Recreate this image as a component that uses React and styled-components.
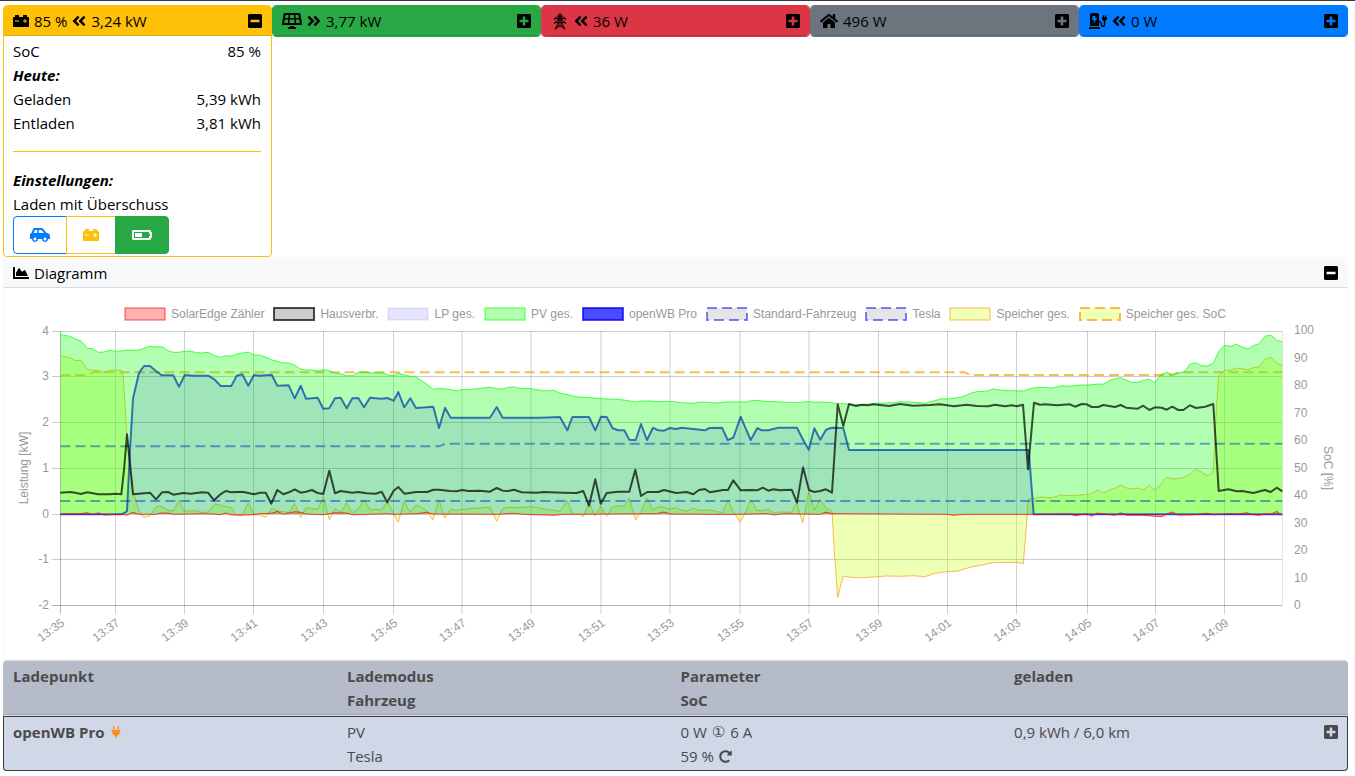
import React from "react";
import styled, { createGlobalStyle } from "styled-components";
import {
  FaAngleDoubleLeft,
  FaAngleDoubleRight,
  FaBatteryHalf,
  FaCarBattery,
  FaCarSide,
  FaChargingStation,
  FaChartArea,
  FaHome,
  FaMinusSquare,
  FaPlug,
  FaPlusSquare,
  FaRedoAlt,
  FaSolarPanel,
} from "react-icons/fa";

const GlobalStyle = createGlobalStyle`
  * { box-sizing: border-box; }
  body {
    margin: 0;
    background: #fff;
    color: #000;
    font: 15px/24px "Open Sans", "Noto Sans", sans-serif;
  }
  button { font: inherit; cursor: pointer; }
`;

const Page = styled.main`
  border-top: 1px solid #343a40;
  padding: 4px 7px 4px 3px;
`;

const CardDeck = styled.div`
  display: grid;
  grid-template-columns: repeat(5, 1fr);
  align-items: start;
`;

const Card = styled.section`
  border: 1px solid ${(p) => p.$color};
  border-radius: 4px;
  overflow: hidden;
`;

const CardHeader = styled.header`
  display: flex;
  align-items: center;
  justify-content: space-between;
  height: 30px;
  padding: 1px 9px 0;
  background: ${(p) => p.$color};
  border-bottom: 1px solid rgba(0, 0, 0, 0.125);
`;

const HeaderLabel = styled.span`
  display: flex;
  align-items: center;
  gap: 5px;
  white-space: nowrap;

  svg {
    flex: none;
  }
`;

const ToggleButton = styled.button`
  display: flex;
  padding: 0;
  border: 0;
  background: none;
  color: inherit;

  svg {
    width: 14px;
    height: 16px;
  }
`;

const Discharging = styled(FaAngleDoubleLeft)`
  width: 14px;
  height: 16px;
`;

const Producing = styled(FaAngleDoubleRight)`
  width: 14px;
  height: 16px;
`;

const CardBody = styled.div`
  padding: 3px 10px 2px 9px;
`;

const ValueRow = styled.div`
  display: flex;
  justify-content: space-between;
`;

const Subtitle = styled.div`
  font-weight: 700;
  font-style: italic;
`;

const Divider = styled.hr`
  margin: 16px 0;
  border: 0;
  border-top: 1px solid ${(p) => p.$color};
`;

const ButtonGroup = styled.div`
  display: flex;
`;

const GroupButton = styled.button`
  display: flex;
  align-items: center;
  justify-content: center;
  height: 38px;
  padding: 0 16px;
  border: 1px solid ${(p) => p.$color};
  background: ${(p) => (p.$active ? p.$color : "#fff")};
  color: ${(p) => (p.$active ? "#fff" : p.$color)};

  & + & {
    margin-left: -1px;
  }
  &:first-child {
    border-radius: 4px 0 0 4px;
  }
  &:last-child {
    border-radius: 0 4px 4px 0;
  }
`;

const ChartCard = styled.section`
  border: 1px solid #f8f9fa;
  border-top: 0;
  border-radius: 4px;
`;

const ChartHeader = styled.header`
  display: flex;
  align-items: center;
  justify-content: space-between;
  height: 31px;
  padding: 1px 9px 0;
  background: #f8f9fa;
  border-bottom: 1px solid #d9dadb;
`;

const Legend = styled.ul`
  display: flex;
  flex-wrap: wrap;
  justify-content: center;
  gap: 10px;
  margin: 0;
  padding: 19px 0 1px;
  list-style: none;
  color: #999;
  font: 12px/14px "Liberation Sans", Arial, sans-serif;
`;

const LegendItem = styled.li`
  display: flex;
  align-items: center;
  gap: 6px;
`;

const Swatch = styled.svg`
  width: 40px;
  height: 12px;
  overflow: visible;
`;

const Plot = styled.svg`
  display: block;
  width: 100%;
  height: auto;

  text {
    fill: #999;
    font: 12px "Liberation Sans", Arial, sans-serif;
  }
`;

const PointTable = styled.table`
  width: 100%;
  table-layout: fixed;
  border-collapse: separate;
  border-spacing: 0;
  color: #4b4b4b;

  th:first-child,
  td:first-child {
    width: 25.2%;
  }
  th:last-child,
  td:last-child {
    width: 25.2%;
  }
`;

const HeadCell = styled.th`
  padding: 3px 5px;
  background: #b5bbc9;
  border-top: 1px solid #d8dbe0;
  border-bottom: 1px solid #dfe2e8;
  box-shadow: inset 0 -1px #9ea4b0;
  text-align: left;
  vertical-align: top;
  font-weight: 700;

  &:first-child {
    border-top-left-radius: 4px;
    padding-left: 10px;
  }
  &:last-child {
    border-top-right-radius: 4px;
  }
`;

const BodyCell = styled.td`
  padding: 3px 5px 2px;
  background: #d0d7e7;
  border: solid #343a40;
  border-width: 1px 0;
  vertical-align: top;

  &:first-child {
    border-left-width: 1px;
    border-bottom-left-radius: 4px;
    padding-left: 9px;
    font-weight: 700;
  }
  &:last-child {
    border-right-width: 1px;
    border-bottom-right-radius: 4px;
    padding-right: 9px;
  }
`;

const CellLine = styled.div`
  display: flex;
  align-items: center;
  gap: 5px;
`;

const SplitLine = styled(CellLine)`
  justify-content: space-between;
`;

const PhaseCount = styled.span`
  font-family: "DejaVu Sans", sans-serif;
`;

const Pylon = () => (
  <svg width="18" height="18" viewBox="1 0 18 18" fill="none" stroke="currentColor" strokeWidth=".9">
    <path d="M8.5 5V2.5L10 1l1.500 1.500V5M4.500 6.500 8.500 3.500h3l4 3M4.500 6.500h11M4.500 10.500 8.500 7.500h3l4 3M4.500 10.500h11M8.500 5 8 11 5 17.500M11.500 5 12 11l3 6.500M8.500 3.500l3 3M11.500 3.500l-3 3M8.500 7l3.300 3.500M11.500 7l-3.300 3.500M8 11l5.500 4M12 11l-5.500 4M5.500 17l4.500-3 4.500 3M4.500 6.500v1.500M15.500 6.500v1.500M4.500 10.500V12M15.500 10.500V12" />
  </svg>
);

/* Each series is a list of stretches: a start offset, then x, y pairs, all in thirds of a plot unit. */
const trace = (...stretches) =>
  stretches.flatMap(([offset, ...v]) => {
    const points = [];
    for (let i = 0; i < v.length; i += 2) {
      points.push([(offset + v[i]) / 3, 290 + v[i + 1] / 3]);
    }
    return points;
  });

const line = (points) =>
  "M" + points.map(([x, y]) => `${x.toFixed(1)} ${y.toFixed(1)}`).join("L");

const ZERO = 514;
const area = (points) =>
  `${line(points)}L${points[points.length - 1][0].toFixed(1)} ${ZERO}L${points[0][0].toFixed(1)} ${ZERO}Z`;

const pv = trace(
  [0, 181,131,190,136,208,138,226,147,243,153,262,175,279,176,295,187,312,186,330,181,347,184,364,183,381,180,399,181,416,180,432,175,450,169,468,171,486,170,504,182,520,187,537,187,553,184,572,184,590,188,606,189,624,187,644,197,662,202,678,197,694,199,712,191,730,189,745,186,762,195,782,196,798,202,816,210,832,214,848,219,866,219,884,226,902,237,920,240,936,240,953,243,970,239,988,242,1005,249,1023,252,1040,257,1058,257,1075,247,1092,245,1110,249,1127,248,1145,248,1162,254,1181,257],
  [1140, 55,250,72,254,90,259,108,261,125,272,142,284,160,298,178,295,196,297,212,299,230,303,247,298,265,299,282,297,300,295,318,293,332,292,350,296,368,297,385,292,402,291,420,295,437,295,453,296,470,299,488,302,505,302,523,301,540,310,560,313,578,318,596,321,614,322,632,323,650,325,680,327,715,328,745,332,765,336,785,333,815,333,835,335,870,334,905,338,940,340,960,336,985,337,1005,339,1030,337],
  [2100, 75,336,105,336,120,335,135,337,150,333,175,331,190,334,225,335,260,337,290,338,327,335,343,337,360,336,395,338,412,341,430,341,465,344,500,343,535,339,552,340,570,338,580,339,600,335,640,337,675,340,690,336,708,331,725,326,742,327,765,324,785,321,815,309,830,305,850,304,865,302,880,297,905,301,930,302,970,303,985,298,1000,294,1020,292],
  [3060, 65,292,95,294,125,287,150,289,180,285,205,285,235,282,250,283,270,271,300,263,320,271,335,277,355,277,370,271,388,268,405,278,422,254,440,247,458,254,475,249,493,245,510,223,528,218,545,227,562,228,580,220,596,185,613,166,632,169,649,163,666,171,684,177,700,167,718,161,735,139,752,135,770,151,787,155]
);

const storage = trace(
  [0, 181,196,190,200,208,202,226,212,243,211,262,238,279,241,295,242,312,247,330,241,364,241,370,260,381,450,399,600,416,660,424,675,432,682,450,678,468,650,486,649,504,661,520,663,537,632,553,664,572,662,590,663,606,668,624,666,644,642,662,646,694,653,708,675,726,677,745,639,762,675,780,675,797,682,815,655,832,662,866,668,884,640,902,682,918,653,953,658,970,621,988,689,1005,656,1022,667,1040,638,1057,668,1074,658,1092,629,1110,660,1127,658,1145,661,1162,633,1181,672],
  [1140, 55,697,72,634,90,667,108,645,125,652,142,664,158,690,177,629,194,684,212,658,230,661,265,656,300,654,330,651,350,694,368,656,385,652,420,653,453,650,488,656,540,664,562,632,578,673,595,672,610,679,627,638,645,678,662,649,680,679,697,651,715,647,732,649,748,625,767,690,783,665,800,623,818,658,835,651,852,652,870,657,888,653,905,661,922,663,940,655,957,661,990,660,1027,668,1044,630],
  [2100, 100,665,121,697,137,665,153,629,170,661,190,662,205,657,220,669,240,666,274,667,290,640,308,699,327,603,343,661,361,628,378,655,396,664,404,800,413,922,422,885,430,858,450,862,485,863,520,861,560,858,600,859,640,857,675,860,700,851,740,845,770,844,810,832,850,824,880,818,950,817,970,821,978,720,985,628,1000,626,1020,621],
  [3060, 60,621,95,623,125,615,155,617,210,613,233,600,250,609,270,599,285,595,302,585,320,594,335,597,355,594,370,599,388,586,406,602,440,562,458,567,490,563,510,553,528,537,545,547,562,557,575,551,580,540,590,340,596,258,613,241,630,241,650,234,684,239,700,233,718,231,735,208,752,202,770,219,787,227]
);

const charge = trace(
  [0, 181,673,364,673,375,668,381,663,390,480,399,325,405,300,416,252,424,238,433,228,450,228,468,243,485,256,520,256,537,290,554,255,580,257,625,257,643,268,662,288,694,288,710,257,727,253,745,287,762,255,780,257,815,254,832,287,866,286,884,325,902,287,918,326,953,323,970,356,988,355,1005,325,1022,323,1040,355,1057,325,1075,324,1092,352,1110,323,1145,326,1162,324,1181,332],
  [1140, 55,306,73,352,91,325,108,354,160,350,177,414,195,353,212,383,330,383,350,351,368,383,480,383,540,381,562,421,577,381,627,381,646,421,663,380,680,381,698,415,715,421,733,421,748,449,767,450,783,402,801,450,819,413,835,421,852,422,870,414,888,417,905,413,975,421,988,414,1026,413,1043,450],
  [2100, 84,450,100,443,122,380,137,415,152,450,172,414,185,421,205,421,235,413,291,413,308,447,326,479,343,415,361,449,378,419,395,413,430,414,447,480,986,480,1001,673,1020,673],
  [3060, 787,673]
);

const house = trace(
  [0, 181,608,210,606,226,608,243,612,262,607,295,613,330,613,347,611,364,613,372,540,381,433,390,520,399,613,416,611,450,608,468,628,486,607,504,606,520,614,550,609,572,611,606,607,624,608,642,631,660,614,677,603,694,607,712,606,730,606,762,613,780,608,797,608,814,641,832,600,850,613,867,607,884,598,902,608,918,605,936,600,953,609,970,612,988,542,1005,610,1022,603,1057,608,1075,606,1100,610,1127,611,1145,605,1162,637,1181,602],
  [1140, 55,591,73,611,108,606,142,606,160,599,177,599,210,603,230,604,247,600,265,603,300,602,330,605,350,594,368,602,385,603,402,599,425,607,470,608,490,606,550,608,590,609,610,603,627,647,646,568,662,641,680,609,715,605,748,605,766,539,783,618,802,606,835,606,852,600,888,609,920,606,940,613,957,600,975,597,990,607,1030,600,1044,600],
  [2100, 100,571,122,601,150,600,172,601,188,593,205,602,220,598,240,601,275,599,291,638,309,532,327,600,343,606,361,603,378,598,396,608,413,343,430,408,447,342,468,348,485,344,505,346,520,343,567,348,600,342,640,347,690,345,720,343,762,349,800,344,830,348,865,349,885,344,915,349,935,346,950,349,969,344,984,538,1002,338,1020,344],
  [3060, 62,344,75,343,110,346,150,343,165,350,185,342,200,343,215,351,235,351,250,345,285,351,302,345,318,353,353,356,370,347,388,360,405,352,425,353,440,359,457,350,475,360,490,360,510,346,528,354,555,350,580,342,588,470,596,603,625,598,650,604,666,603,700,609,735,600,752,606,770,593,787,604]
);

const meter = trace(
  [0, 181,672,240,671,262,668,279,674,295,668,312,675,364,672,381,676,399,667,416,673,465,673,486,669,504,669,520,673,606,671,640,672,662,674,677,669,694,675,745,675,780,671,815,670,832,664,850,673,884,665,902,667,918,672,970,674,1005,668,1040,669,1057,674,1140,672,1162,671],
  [1140, 40,673,110,671,140,667,160,672,350,673,400,670,430,673,523,676,550,673,830,671,852,666,870,672,1000,673],
  [2100, 100,673,205,671,222,675,250,671,360,673,378,666,396,671,742,673,760,676,790,673,1020,673],
  [3060, 150,672,165,677,200,671,215,679,232,669,285,676,302,668,320,676,370,676,405,679,428,680,440,671,458,666,475,675,520,674,562,670,580,674,630,671,655,672,680,668,700,674,718,676,735,671,752,673,770,664,787,676]
);

const storageSoc = trace([0, 181,255,265,255,280,247,2895,247,2910,255,3518,255,3535,247,3847,247]);
const teslaSoc = trace([0, 181,469,1317,469,1335,461,3847,461]);
const standardSoc = trace([0, 181,633,3847,633]);

const orange = "rgba(255,155,13,.7)";
const blueSoc = "rgba(0,0,255,.5)";

const LEGEND = [
  { label: "SolarEdge Zähler", fill: "rgba(255,0,0,.3)", stroke: "rgba(255,0,0,.7)", width: 1 },
  { label: "Hausverbr.", fill: "rgba(0,0,0,.2)", stroke: "rgba(0,0,0,.7)", width: 2 },
  { label: "LP ges.", fill: "rgba(0,0,255,.1)", stroke: "rgba(0,0,40,.1)", width: 1 },
  { label: "PV ges.", fill: "rgba(0,255,0,.3)", stroke: "rgba(0,255,0,.7)", width: 1 },
  { label: "openWB Pro", fill: "rgba(0,0,255,.7)", stroke: "rgba(0,0,255,.7)", width: 2 },
  { label: "Standard-Fahrzeug", fill: "rgba(0,0,0,.1)", stroke: blueSoc, width: 2, dashed: true },
  { label: "Tesla", fill: "rgba(0,0,0,.1)", stroke: blueSoc, width: 2, dashed: true },
  { label: "Speicher ges.", fill: "rgba(200,255,13,.3)", stroke: orange, width: 1 },
  { label: "Speicher ges. SoC", fill: "rgba(200,255,13,.3)", stroke: orange, width: 2, dashed: true },
];

const POWER_TICKS = [
  [4, 331.5], [3, 376.5], [2, 422.5], [1, 468.5], [0, 514.5], [-1, 559.5], [-2, 605.5],
];

const SOC_TICKS = [100, 90, 80, 70, 60, 50, 40, 30, 20, 10, 0];

const TIME_TICKS = [
  ["13:35", 60.5], ["13:37", 115.5], ["13:39", 184.5], ["13:41", 253.5], ["13:43", 323.5],
  ["13:45", 393.5], ["13:47", 462], ["13:49", 531], ["13:51", 601], ["13:53", 670],
  ["13:55", 740], ["13:57", 809], ["13:59", 878.5], ["14:01", 947.5], ["14:03", 1016.5],
  ["14:05", 1087.5], ["14:07", 1155.5], ["14:09", 1224.5],
];

function PowerChart() {
  return (
    <Plot viewBox="4 322 1343 337" role="img" aria-label="Leistung und SoC">
      <g stroke="#000" strokeOpacity=".2">
        {POWER_TICKS.map(([v, y]) => (
          <path key={v} d={`M52 ${y}H1282`} strokeOpacity={v === -2 ? 0.3 : 0.2} />
        ))}
        {TIME_TICKS.map(([t, x], i) => (
          <path key={t} d={`M${x} 331V614`} strokeOpacity={i === 0 ? 0.28 : 0.18} />
        ))}
        <path d="M1282.500 331V606" strokeOpacity=".1" />
      </g>
      <g fill="none" strokeLinejoin="round">
        <path d={line(storageSoc)} stroke={orange} strokeWidth="2" strokeDasharray="10 5" />
        <path d={area(storage)} fill="rgba(200,255,13,.3)" />
        <path d={line(storage)} stroke={orange} strokeWidth="1" />
        <path d={line(teslaSoc)} stroke={blueSoc} strokeWidth="2" strokeDasharray="10 5" />
        <path d={line(standardSoc)} stroke={blueSoc} strokeWidth="2" strokeDasharray="10 5" />
        <path d={line(charge)} stroke="rgba(0,0,255,.7)" strokeWidth="2" />
        <path d={area(pv)} fill="rgba(0,255,0,.3)" />
        <path d={line(pv)} stroke="rgba(0,255,0,.7)" strokeWidth="1" />
        <path d={area(charge)} fill="rgba(0,0,255,.1)" />
        <path d={line(charge)} stroke="rgba(0,0,40,.1)" strokeWidth="1" />
        <path d={line(house)} stroke="rgba(0,0,0,.7)" strokeWidth="2" />
        <path d={area(meter)} fill="rgba(255,0,0,.3)" />
        <path d={line(meter)} stroke="rgba(255,0,0,.7)" strokeWidth="1" />
      </g>
      {POWER_TICKS.map(([v, y]) => (
        <text key={v} x="49" y={y + 3} textAnchor="end">{v}</text>
      ))}
      {SOC_TICKS.map((v, i) => (
        <text key={v} x="1294" y={334 + i * 27.5}>{v}</text>
      ))}
      {TIME_TICKS.map(([t, x]) => (
        <text key={t} transform={`translate(${x + 5} 624.500) rotate(-36)`} textAnchor="end">{t}</text>
      ))}
      <text transform="translate(28 468) rotate(-90)" textAnchor="middle">Leistung [kW]</text>
      <text transform="translate(1324 468) rotate(90)" textAnchor="middle">SoC [%]</text>
    </Plot>
  );
}

function StatusCard({ color, open, icon, children, label }) {
  return (
    <Card $color={color}>
      <CardHeader $color={color}>
        <HeaderLabel>
          {icon}
          {label}
        </HeaderLabel>
        <ToggleButton type="button" aria-expanded={!!open} aria-label="Details">
          {open ? <FaMinusSquare /> : <FaPlusSquare />}
        </ToggleButton>
      </CardHeader>
      {open && <CardBody>{children}</CardBody>}
    </Card>
  );
}

export default function App() {
  return (
    <>
      <GlobalStyle />
      <Page>
        <CardDeck>
          <StatusCard
            open
            color="#ffc107"
            icon={<FaCarBattery size={16} />}
            label={<>85 % <Discharging /> 3,24 kW</>}
          >
            <ValueRow><span>SoC</span><span>85 %</span></ValueRow>
            <Subtitle>Heute:</Subtitle>
            <ValueRow><span>Geladen</span><span>5,39 kWh</span></ValueRow>
            <ValueRow><span>Entladen</span><span>3,81 kWh</span></ValueRow>
            <Divider $color="#ffc107" />
            <Subtitle>Einstellungen:</Subtitle>
            <div id="surplus">Laden mit Überschuss</div>
            <ButtonGroup role="group" aria-labelledby="surplus">
              <GroupButton type="button" $color="#007bff" aria-label="Fahrzeug">
                <FaCarSide size={20} />
              </GroupButton>
              <GroupButton type="button" $color="#ffc107" aria-label="Speicher">
                <FaCarBattery size={16} />
              </GroupButton>
              <GroupButton type="button" $color="#28a745" $active aria-pressed="true" aria-label="Mindest-SoC">
                <FaBatteryHalf size={20} />
              </GroupButton>
            </ButtonGroup>
          </StatusCard>
          <StatusCard
            color="#28a745"
            icon={<FaSolarPanel size={20} />}
            label={<><Producing /> 3,77 kW</>}
          />
          <StatusCard
            color="#dc3545"
            icon={<Pylon />}
            label={<><Discharging /> 36 W</>}
          />
          <StatusCard color="#6c757d" icon={<FaHome size={18} />} label="496 W" />
          <StatusCard
            color="#007bff"
            icon={<FaChargingStation size={18} />}
            label={<><Discharging /> 0 W</>}
          />
        </CardDeck>

        <ChartCard>
          <ChartHeader>
            <HeaderLabel><FaChartArea size={16} />Diagramm</HeaderLabel>
            <ToggleButton type="button" aria-expanded="true" aria-label="Diagramm">
              <FaMinusSquare />
            </ToggleButton>
          </ChartHeader>
          <Legend>
            {LEGEND.map((item) => (
              <LegendItem key={item.label}>
                <Swatch viewBox="0 0 40 12">
                  <rect
                    width="40"
                    height="12"
                    fill={item.fill}
                    stroke={item.stroke}
                    strokeWidth={item.width}
                    strokeDasharray={item.dashed ? "10 5" : undefined}
                  />
                </Swatch>
                {item.label}
              </LegendItem>
            ))}
          </Legend>
          <PowerChart />
        </ChartCard>

        <PointTable>
          <thead>
            <tr>
              <HeadCell scope="col">Ladepunkt</HeadCell>
              <HeadCell scope="col">Lademodus<br />Fahrzeug</HeadCell>
              <HeadCell scope="col">Parameter<br />SoC</HeadCell>
              <HeadCell scope="col">geladen</HeadCell>
            </tr>
          </thead>
          <tbody>
            <tr>
              <BodyCell>
                <CellLine>openWB Pro <FaPlug size={12} color="#fd8b14" /></CellLine>
              </BodyCell>
              <BodyCell>
                <CellLine>PV</CellLine>
                <CellLine>Tesla</CellLine>
              </BodyCell>
              <BodyCell>
                <CellLine>0 W <PhaseCount>①</PhaseCount> 6 A</CellLine>
                <CellLine>59 % <FaRedoAlt size={13} /></CellLine>
              </BodyCell>
              <BodyCell>
                <SplitLine>
                  0,9 kWh / 6,0 km
                  <ToggleButton type="button" aria-expanded="false" aria-label="Ladepunkt Details">
                    <FaPlusSquare />
                  </ToggleButton>
                </SplitLine>
              </BodyCell>
            </tr>
          </tbody>
        </PointTable>
      </Page>
    </>
  );
}
